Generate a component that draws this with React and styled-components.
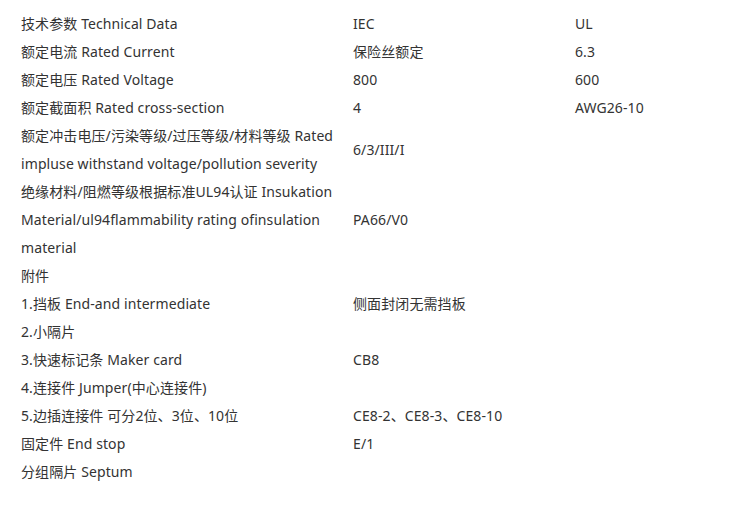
import React from "react";
import styled, { createGlobalStyle } from "styled-components";

const GlobalStyle = createGlobalStyle`
  html, body {
    margin: 0;
    padding: 0;
    background: #fff;
  }
`;

const rows = [
  ["技术参数 Technical Data", "IEC", "UL"],
  ["额定电流 Rated Current", "保险丝额定", "6.3"],
  ["额定电压 Rated Voltage", "800", "600"],
  ["额定截面积 Rated cross-section", "4", "AWG26-10"],
  ["额定冲击电压/污染等级/过压等级/材料等级 Rated impluse withstand voltage/pollution severity", "6/3/III/I", ""],
  ["绝缘材料/阻燃等级根据标准UL94认证 Insukation Material/ul94flammability rating ofinsulation material", "PA66/V0", ""],
  ["附件", "", ""],
  ["1.挡板 End-and intermediate", "侧面封闭无需挡板", ""],
  ["2.小隔片", "", ""],
  ["3.快速标记条 Maker card", "CB8", ""],
  ["4.连接件 Jumper(中心连接件)", "", ""],
  ["5.边插连接件 可分2位、3位、10位", "CE8-2、CE8-3、CE8-10", ""],
  ["固定件 End stop", "E/1", ""],
  ["分组隔片 Septum", "", ""],
];

export default function App() {
  return (
    <Page>
      <GlobalStyle />
      <DataTable>
        <colgroup>
          <col style={{ width: 332 }} />
          <col style={{ width: 222 }} />
          <col />
        </colgroup>
        <tbody>
          {rows.map((r, i) => (
            <tr key={i}>
              <Cell>{r[0]}</Cell>
              <Cell>{r[1]}</Cell>
              <Cell>{r[2]}</Cell>
            </tr>
          ))}
        </tbody>
      </DataTable>
    </Page>
  );
}

const Page = styled.div`
  padding: 10px 20px 0 20px;
  font-family: "Noto Sans", "Noto Sans CJK SC", sans-serif;
  font-size: 14px;
  letter-spacing: 0.1px;
  color: #333;
`;

const DataTable = styled.table`
  border-collapse: collapse;
  table-layout: fixed;
  width: 700px;
`;

const Cell = styled.td`
  padding: 0 1px;
  line-height: 28px;
  vertical-align: middle;
  text-align: left;
  word-break: normal;
`;
